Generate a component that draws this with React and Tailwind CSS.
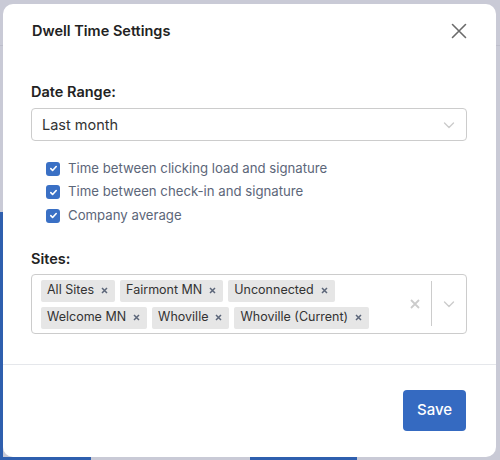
import React from 'react';

const font = { fontFamily: 'Inter, "Liberation Sans", sans-serif' };

const Check = ({ label }) => (
    <label className="flex items-center h-[23.5px]">
        <span className="w-[14px] h-[14px] rounded-[3px] bg-[#3a70c5] flex items-center justify-center flex-shrink-0">
            <svg width="9" height="9" viewBox="0 0 10 10" fill="none">
                <path d="M2 5.2l2 2 4-4.4" stroke="white" strokeWidth="1.8" strokeLinecap="round" strokeLinejoin="round"/>
            </svg>
        </span>
        <span className="ml-[8px] text-[13.2px] text-[#5c6679]">{label}</span>
    </label>
);

const Tag = ({ text }) => (
    <div className="h-[22px] flex items-center bg-[#e6e6e6] rounded-[2px] pl-[6px] pr-[7px] text-[12.5px] text-[#333]">
        <span>{text}</span>
        <svg width="7" height="7" viewBox="0 0 7 7" fill="none" className="ml-[7px]">
            <path d="M1 1l5 5M6 1l-5 5" stroke="#5c6679" strokeWidth="1.5"/>
        </svg>
    </div>
);

const Chevron = () => (
    <svg width="14" height="14" viewBox="0 0 14 14" fill="none">
        <path d="M2.5 5l4.5 4.5L11.5 5" stroke="#cccccc" strokeWidth="1.4" strokeLinecap="round" strokeLinejoin="round"/>
    </svg>
);

const App = () => {
    return (
        <div className="relative w-[500px] h-[460px] bg-[#c9cad6] overflow-hidden" style={font}>
            {/* page behind the overlay */}
            <div className="absolute left-0 top-[45px] w-[500px] h-px bg-[#bdbecb]"/>
            <div className="absolute left-0 top-[212px] w-[3px] h-[248px] bg-[#2f5fae]"/>
            <div className="absolute left-0 top-[457px] w-[91px] h-[3px] bg-[#2f5fae]"/>
            <div className="absolute left-[250px] top-[457px] w-[107px] h-[3px] bg-[#2f5fae]"/>

            <div className="absolute left-[3px] top-[4px] w-[493px] h-[453px] bg-white rounded-[10px] flex flex-col">
                <div className="flex justify-between items-center pt-[17px] pl-[29px] pr-[29px]">
                    <div className="text-[14.5px] font-semibold leading-[20px] text-[#222]">Dwell Time Settings</div>
                    <svg width="16" height="16" viewBox="0 0 16 16" fill="none">
                        <path d="M1.5 1.5l13 13M14.5 1.5l-13 13" stroke="#6b6b6b" strokeWidth="1.6" strokeLinecap="round"/>
                    </svg>
                </div>

                <div className="px-[28px] flex flex-col">
                    <div className="mt-[41px] text-[14.5px] font-semibold leading-[20px] text-[#222]">Date Range:</div>
                    <div className="mt-[6px] h-[33px] border border-[#cccccc] rounded-[4px] flex items-center justify-between pl-[10px] pr-[10px] mr-[1px]">
                        <span className="text-[14.5px] text-[#333] mt-[1px]">Last month</span>
                        <Chevron/>
                    </div>

                    <div className="mt-[16px] ml-[15px] flex flex-col">
                        <Check label="Time between clicking load and signature"/>
                        <Check label="Time between check-in and signature"/>
                        <Check label="Company average"/>
                    </div>

                    <div className="mt-[21px] text-[14.5px] font-semibold leading-[20px] text-[#222]">Sites:</div>
                    <div className="mt-[5px] h-[60px] border border-[#cccccc] rounded-[4px] flex items-stretch mr-[1px]">
                        <div className="flex-1 flex flex-wrap content-start gap-x-[5px] gap-y-[5px] pl-[9px] pt-[5px]">
                            {['All Sites', 'Fairmont MN', 'Unconnected', 'Welcome MN', 'Whoville', 'Whoville (Current)'].map(t => (
                                <Tag key={t} text={t}/>
                            ))}
                            <div className="w-[40px]"/>
                        </div>
                        <div className="flex items-center">
                            <svg width="12" height="12" viewBox="0 0 12 12" fill="none" className="mr-[10px]">
                                <path d="M2 2l8 8M10 2l-8 8" stroke="#cccccc" strokeWidth="1.8"/>
                            </svg>
                            <div className="w-px h-[45px] bg-[#cccccc]"/>
                            <div className="px-[10px]"><Chevron/></div>
                        </div>
                    </div>
                </div>

                <div className="mt-[30px] h-px bg-[#e5e7eb]"/>

                <div className="flex justify-end pr-[30px] pt-[25px]">
                    <button className="w-[63px] h-[41px] bg-[#356ac1] rounded-[4px] text-white text-[15px] font-medium">Save</button>
                </div>
            </div>
        </div>
    );
};

export default App;
